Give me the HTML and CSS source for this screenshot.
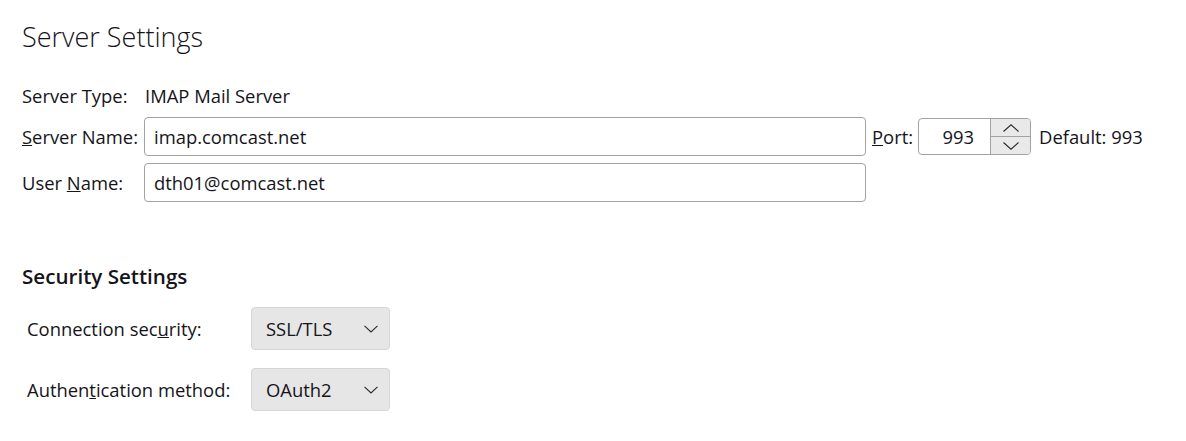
FILE: index.html
```html
<!DOCTYPE html>
<html lang="en">
<head>
<meta charset="utf-8">
<title>Server Settings</title>
<link rel="stylesheet" href="styles.css">
</head>
<body>
<div class="page">
  <h1 class="title">Server Settings</h1>

  <div class="server">
    <div class="row row-type">
      <span class="label">Server Type:</span>
      <span class="value">IMAP Mail Server</span>
    </div>

    <div class="row row-field">
      <span class="label"><u>S</u>erver Name:</span>
      <div class="textbox wide">imap.comcast.net</div>
      <span class="port-label"><u>P</u>ort:</span>
      <div class="port">
        <span class="port-value">993</span>
        <div class="spinner">
          <span class="spin up">
            <svg width="16" height="8" viewBox="0 0 16 8"><path d="M0.5 7.5 L8 0.8 L15.5 7.5" fill="none" stroke="#2b2b2b" stroke-width="1.1"/></svg>
          </span>
          <span class="spin down">
            <svg width="16" height="8" viewBox="0 0 16 8"><path d="M0.5 0.5 L8 7.2 L15.5 0.5" fill="none" stroke="#2b2b2b" stroke-width="1.1"/></svg>
          </span>
        </div>
      </div>
      <span class="default">Default: 993</span>
    </div>

    <div class="row row-field">
      <span class="label">User <u>N</u>ame:</span>
      <div class="textbox wide">dth01@comcast.net</div>
    </div>
  </div>

  <h2 class="section">Security Settings</h2>

  <div class="security">
    <div class="sec-row">
      <span class="sec-label">Connection sec<u>u</u>rity:</span>
      <div class="select">
        <span class="select-value">SSL/TLS</span>
        <svg class="chevron" width="14" height="8" viewBox="0 0 14 8"><path d="M0.5 0.8 L7 7 L13.5 0.8" fill="none" stroke="#2b2b2b" stroke-width="1.1"/></svg>
      </div>
    </div>
    <div class="sec-row">
      <span class="sec-label">Authen<u>t</u>ication method:</span>
      <div class="select">
        <span class="select-value">OAuth2</span>
        <svg class="chevron" width="14" height="8" viewBox="0 0 14 8"><path d="M0.5 0.8 L7 7 L13.5 0.8" fill="none" stroke="#2b2b2b" stroke-width="1.1"/></svg>
      </div>
    </div>
  </div>
</div>
</body>
</html>
```

FILE: styles.css
```css
html, body {
  margin: 0;
  padding: 0;
  background: #ffffff;
}

body {
  font-family: "Open Sans", "Noto Sans", sans-serif;
  font-size: 18.4px;
  color: #15141a;
}

.page {
  padding: 20px 22px 0 22px;
}

.title {
  margin: 0;
  font-size: 27px;
  line-height: 34px;
  font-weight: 300;
  color: #15141a;
}

.server {
  margin-top: 30px;
  display: flex;
  flex-direction: column;
}

.row {
  display: flex;
  align-items: center;
}

.row-type {
  height: 24px;
  line-height: 24px;
}

.row-field {
  height: 39px;
  margin-top: 7px;
}

.row-type + .row-field {
  margin-top: 9px;
}

.label {
  width: 122px;
  flex: none;
  white-space: nowrap;
}

.value {
  padding-left: 1px;
}

.textbox {
  box-sizing: border-box;
  height: 39px;
  border: 1px solid #a2a2a2;
  border-radius: 4px;
  padding: 0 9px;
  display: flex;
  align-items: center;
  background: #fff;
}

.wide {
  width: 722px;
}

.port-label {
  margin-left: 6px;
  white-space: nowrap;
}

.port {
  margin-left: 5px;
  box-sizing: border-box;
  width: 113px;
  height: 37px;
  border: 1px solid #a2a2a2;
  border-radius: 4px;
  display: flex;
  overflow: hidden;
}

.port-value {
  flex: 1;
  display: flex;
  align-items: center;
  justify-content: flex-end;
  padding-right: 16px;
}

.spinner {
  width: 39px;
  flex: none;
  display: flex;
  flex-direction: column;
  border-left: 1px solid #a2a2a2;
  background: #e9e9e9;
}

.spin {
  flex: 1;
  display: flex;
  align-items: center;
  justify-content: center;
}

.spin.up {
  border-bottom: 1px solid #a2a2a2;
}

.default {
  margin-left: 8px;
  white-space: nowrap;
}

.section {
  margin: 60px 0 0 0;
  font-size: 20.6px;
  line-height: 28px;
  font-weight: 600;
}

.security {
  margin-top: 17px;
  display: flex;
  flex-direction: column;
  gap: 18px;
}

.sec-row {
  display: flex;
  align-items: center;
  height: 43px;
}

.sec-label {
  width: 224px;
  padding-left: 5px;
  flex: none;
  white-space: nowrap;
}

.select {
  box-sizing: border-box;
  width: 139px;
  height: 43px;
  background: #e6e6e6;
  border: 1px solid #d6d6d6;
  border-radius: 4px;
  display: flex;
  align-items: center;
  justify-content: space-between;
  padding: 0 11px 0 14px;
}

.chevron {
  display: block;
}
```
